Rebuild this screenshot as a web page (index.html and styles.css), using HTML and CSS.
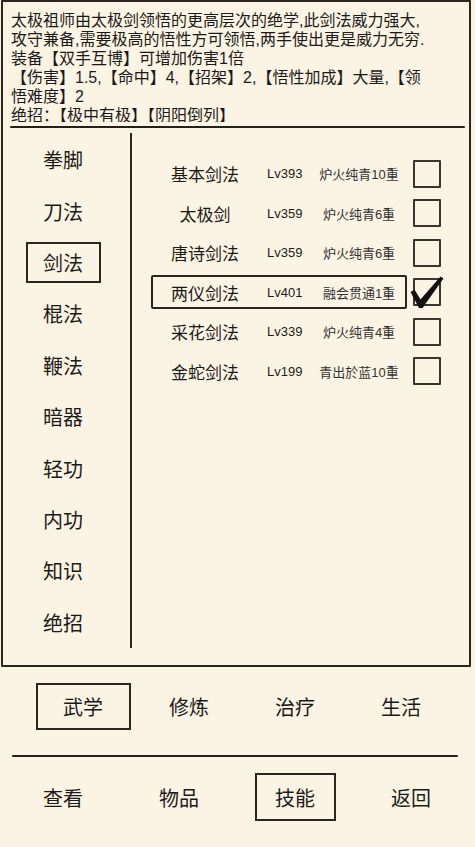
FILE: index.html
```html
<!DOCTYPE html>
<html lang="zh">
<head>
    <meta charset="UTF-8">
    <meta name="viewport" content="width=device-width, initial-scale=1.0">
    <title>技能</title>
    <link rel="stylesheet" href="styles.css">
</head>
<body>

<main class="panel">
    <p class="desc">
        太极祖师由太极剑领悟的更高层次的绝学,此剑法威力强大,<br>
        攻守兼备,需要极高的悟性方可领悟,两手使出更是威力无穷.<br>
        装备【双手互博】可增加伤害1倍<br>
        【伤害】1.5,【命中】4,【招架】2,【悟性加成】大量,【领<br>
        悟难度】2<br>
        绝招：【极中有极】【阴阳倒列】
    </p>
    <div class="rule"></div>

    <section class="content">
        <ul class="cats">
            <li><span>拳脚</span></li>
            <li><span>刀法</span></li>
            <li class="active"><span>剑法</span></li>
            <li><span>棍法</span></li>
            <li><span>鞭法</span></li>
            <li><span>暗器</span></li>
            <li><span>轻功</span></li>
            <li><span>内功</span></li>
            <li><span>知识</span></li>
            <li><span>绝招</span></li>
        </ul>

        <ul class="skills">
            <li class="skill">
                <div class="info"><span class="name">基本剑法</span><span class="lv">Lv393</span><span class="realm">炉火纯青10重</span></div>
                <span class="box"></span>
            </li>
            <li class="skill">
                <div class="info"><span class="name">太极剑</span><span class="lv">Lv359</span><span class="realm">炉火纯青6重</span></div>
                <span class="box"></span>
            </li>
            <li class="skill">
                <div class="info"><span class="name">唐诗剑法</span><span class="lv">Lv359</span><span class="realm">炉火纯青6重</span></div>
                <span class="box"></span>
            </li>
            <li class="skill selected">
                <div class="info"><span class="name">两仪剑法</span><span class="lv">Lv401</span><span class="realm">融会贯通1重</span></div>
                <span class="box">
                    <svg class="tick" viewBox="0 0 34 33" width="34" height="33">
                        <path d="M0.5 16 L4.5 13.5 L10.5 23.5 L30.5 0.5 L33.5 2.5 L12.5 32 L9 32 Z" fill="#111"/>
                    </svg>
                </span>
            </li>
            <li class="skill">
                <div class="info"><span class="name">采花剑法</span><span class="lv">Lv339</span><span class="realm">炉火纯青4重</span></div>
                <span class="box"></span>
            </li>
            <li class="skill">
                <div class="info"><span class="name">金蛇剑法</span><span class="lv">Lv199</span><span class="realm">青出於蓝10重</span></div>
                <span class="box"></span>
            </li>
        </ul>
    </section>
</main>

<nav class="tabs">
    <a class="active"><span>武学</span></a>
    <a><span>修炼</span></a>
    <a><span>治疗</span></a>
    <a><span>生活</span></a>
</nav>

<div class="divider"></div>

<nav class="menu">
    <a><span>查看</span></a>
    <a><span>物品</span></a>
    <a class="active"><span>技能</span></a>
    <a><span>返回</span></a>
</nav>

</body>
</html>
```

FILE: styles.css
```css
/* Page and frame */
body {
    margin: 0;
    background-color: #fbf4e4;
    color: #1c1a18;
    font-family: "Liberation Sans", "Noto Sans CJK SC", sans-serif;
}

.panel {
    box-sizing: border-box;
    width: 470px;
    height: 667px;
    margin-left: 1px;
    border: 2px solid #2a2520;
    border-radius: 1px;
}

/* Description text at the top */
.desc {
    height: 111px;
    margin: 0;
    padding: 9px 8px 0 8px;
    overflow: hidden;
    font-size: 16px;
    line-height: 19px;
    white-space: nowrap;
}

.rule {
    height: 2px;
    margin: 4px 4px 0 7px;
    background: #231f1b;
    border-radius: 1px;
}

.content {
    display: flex;
    align-items: flex-start;
}

/* Category column */
.cats {
    list-style: none;
    margin: 5px 0 0 0;
    padding: 1px 7px 0 0;
    width: 120px;
    border-right: 2px solid #2a2520;
}

.cats li {
    height: 51.4px;
    display: flex;
    align-items: center;
    justify-content: center;
    font-size: 20px;
}

.cats span {
    box-sizing: border-box;
    width: 75px;
    height: 41px;
    display: flex;
    align-items: center;
    justify-content: center;
    border: 2px solid transparent;
}

.cats .active span {
    border-color: #2a2520;
}

/* Skill list */
.skills {
    list-style: none;
    margin: 0;
    padding: 26px 0 0 19px;
}

.skill {
    height: 39.5px;
    display: flex;
    align-items: center;
    gap: 6px;
}

.info {
    box-sizing: border-box;
    width: 256px;
    height: 34px;
    display: grid;
    grid-template-columns: 104px 56px 92px;
    align-items: center;
    border: 2px solid transparent;
    border-radius: 2px;
}

.selected .info {
    border-color: #2a2520;
}

.name {
    text-align: center;
    font-size: 17px;
}

.lv {
    padding-left: 10px;
    font-size: 13px;
}

.realm {
    text-align: center;
    font-size: 13px;
    color: #333;
}

.box {
    position: relative;
    box-sizing: border-box;
    width: 28px;
    height: 28px;
    border: 2px solid #3a3530;
    border-radius: 1px;
}

.tick {
    position: absolute;
    left: -5px;
    top: -4px;
}

/* Bottom tabs and menu */
.tabs, .menu {
    display: grid;
    grid-template-columns: repeat(4, 1fr);
    font-size: 20px;
}

.tabs {
    height: 78px;
    padding: 0 21px 0 30px;
}

.menu {
    height: 80px;
    padding: 0 6px 0 5px;
}

.tabs a, .menu a {
    display: flex;
    align-items: center;
    justify-content: center;
}

.tabs span, .menu span {
    box-sizing: border-box;
    display: flex;
    align-items: center;
    justify-content: center;
    border: 2px solid transparent;
}

.tabs span {
    width: 95px;
    height: 47px;
}

.menu span {
    width: 81px;
    height: 48px;
}

.tabs .active span, .menu .active span {
    border-color: #2a2520;
}

.divider {
    height: 2px;
    margin: 10px 17px 0 12px;
    background: #231f1b;
    border-radius: 1px;
}
```
